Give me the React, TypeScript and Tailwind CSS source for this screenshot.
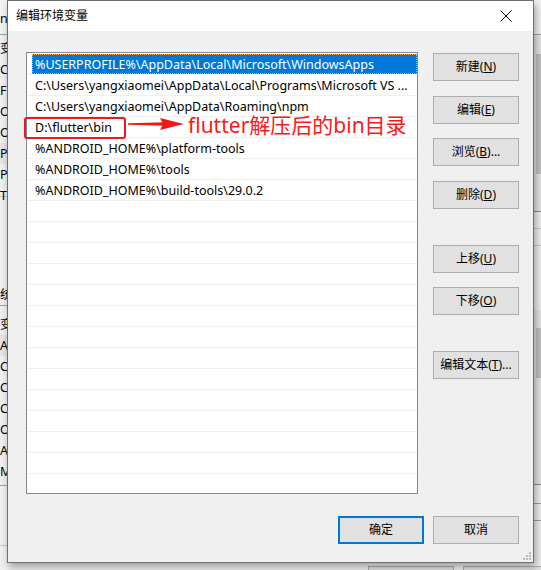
import React from "react";

const paths = [
  "%USERPROFILE%\\AppData\\Local\\Microsoft\\WindowsApps",
  "C:\\Users\\yangxiaomei\\AppData\\Local\\Programs\\Microsoft VS ...",
  "C:\\Users\\yangxiaomei\\AppData\\Roaming\\npm",
  "D:\\flutter\\bin",
  "%ANDROID_HOME%\\platform-tools",
  "%ANDROID_HOME%\\tools",
  "%ANDROID_HOME%\\build-tools\\29.0.2",
];

const bgRows = [
  { y: 8, t: "ng" },
  { y: 38, t: "变" },
  { y: 59, t: "Ch" },
  { y: 80, t: "FL" },
  { y: 101, t: "Or" },
  { y: 122, t: "Or" },
  { y: 143, t: "Pa", hl: true },
  { y: 164, t: "PU" },
  { y: 185, t: "TE" },
  { y: 284, t: "统" },
  { y: 314, t: "变" },
  { y: 335, t: "AN", hl: true },
  { y: 356, t: "Ch" },
  { y: 377, t: "CL" },
  { y: 398, t: "Co" },
  { y: 419, t: "Or" },
  { y: 440, t: "A" },
  { y: 461, t: "M" },
];

const font = { fontFamily: '"Noto Sans", "Noto Sans CJK SC", sans-serif' };

function Btn({ children, primary }: { children: React.ReactNode; primary?: boolean }) {
  return (
    <button
      className={`w-[86px] h-[28px] flex items-center justify-center text-[12px] text-black bg-[#e1e1e1] ${
        primary ? "border-2 border-[#0078d7]" : "border border-[#adadad]"
      }`}
    >
      {children}
    </button>
  );
}

export default function App() {
  return (
    <div className="relative w-[541px] h-[570px] overflow-hidden bg-[#f0f0f0]" style={font}>
      {/* window behind the dialog */}
      <div className="absolute inset-0">
        <div className="absolute left-0 top-0 w-full h-[35px] bg-[#f3f3f3] border-b border-[#a0a0a0]" />
        <div className="absolute left-0 top-[196px] w-[10px] h-[80px] bg-[#f0f0f0] border-t border-[#c8c8c8]" />
        <div className="absolute left-0 top-[305px] w-[10px] border-t border-[#a0a0a0]" />
        <div className="absolute left-0 top-[485px] w-[10px] border-t border-[#a0a0a0]" />
        <div className="absolute left-0 top-[545px] w-[10px] border-t border-[#c8c8c8]" />
        {bgRows.map((r) => (
          <div
            key={r.y + r.t}
            className={`absolute left-0 w-[10px] h-[21px] text-[12.5px] leading-[21px] text-black whitespace-nowrap ${
              r.hl ? "bg-[#e5e5e5]" : ""
            }`}
            style={{ top: r.y }}
          >
            {r.t}
          </div>
        ))}
        <div className="absolute right-0 top-[36px] w-[8px] h-[176px] bg-[#e6e6e6] border-b border-[#8a8a8a]">
          <div className="ml-[3px] mt-[18px] w-[5px] h-[120px] bg-[#c2c2c2]" />
        </div>
        <div className="absolute right-0 top-[228px] w-[8px] border-t border-[#c8c8c8]" />
        <div className="absolute right-0 top-[245px] w-[8px] border-t border-[#c8c8c8]" />
        <div className="absolute right-0 top-[310px] w-[8px] h-[175px] bg-[#e6e6e6] border-b border-[#8a8a8a]">
          <div className="ml-[3px] mt-[18px] w-[5px] h-[50px] bg-[#c2c2c2]" />
        </div>
        <div className="absolute right-0 top-[503px] w-[8px] border-t border-[#a0a0a0]" />
        <div className="absolute right-0 top-[520px] w-[8px] border-t border-[#a0a0a0]" />
        <div className="absolute left-[368px] top-[566px] w-[86px] h-[20px] border border-[#adadad] bg-[#e1e1e1]" />
        <div className="absolute left-[463px] top-[566px] w-[86px] h-[20px] border border-[#adadad] bg-[#e1e1e1]" />
      </div>

      {/* dialog */}
      <div className="relative ml-[7px] w-[527px] h-[563px] border border-[#707070] bg-[#f0f0f0] flex flex-col shadow-[2px_4px_8px_rgba(0,0,0,0.35)]">
        <div className="h-[30px] bg-white flex items-center justify-between pl-[8px] pr-[21px] shrink-0">
          <span className="text-[12px] text-black">编辑环境变量</span>
          <svg width="12" height="12" viewBox="0 0 12 12">
            <path d="M0.5 0.5 L11.5 11.5 M11.5 0.5 L0.5 11.5" stroke="#000" strokeWidth="1" />
          </svg>
        </div>

        <div className="flex-1 relative flex pl-[18px] pt-[21px]">
          <div className="w-[392px] h-[442px] border border-[#828790] bg-white overflow-hidden pt-[1px] pl-[1px]">
            {Array.from({ length: 21 }).map((_, i) => (
              <div key={i} className="h-[21px] border-b border-[#f0f0f0] flex">
                {i === 0 ? (
                  <div className="ml-[4px] flex-1 bg-[#0078d7] text-white text-[12.5px] leading-[19px] pl-[2px] border border-dotted border-[#f5a34a] whitespace-nowrap">
                    {paths[i]}
                  </div>
                ) : (
                  <div className="ml-[5px] pl-[2px] pt-[2px] text-[12.5px] leading-[18px] text-black whitespace-nowrap">
                    {paths[i] ?? ""}
                  </div>
                )}
              </div>
            ))}
          </div>

          <div className="ml-[15px] flex flex-col pt-[1px]">
            <Btn>
              新建(<u>N</u>)
            </Btn>
            <div className="mt-[15px]">
              <Btn>
                编辑(<u>E</u>)
              </Btn>
            </div>
            <div className="mt-[14px]">
              <Btn>
                浏览(<u>B</u>)...
              </Btn>
            </div>
            <div className="mt-[15px]">
              <Btn>
                删除(<u>D</u>)
              </Btn>
            </div>
            <div className="mt-[36px]">
              <Btn>
                上移(<u>U</u>)
              </Btn>
            </div>
            <div className="mt-[14px]">
              <Btn>
                下移(<u>O</u>)
              </Btn>
            </div>
            <div className="mt-[36px]">
              <Btn>
                编辑文本(<u>T</u>)...
              </Btn>
            </div>
          </div>

          <div className="absolute right-[14px] bottom-[18px] flex gap-[9px]">
            <Btn primary>确定</Btn>
            <Btn>取消</Btn>
          </div>

          {/* resize grip */}
          <div className="absolute right-[2px] bottom-[2px] grid grid-cols-3 gap-[1px]">
            {[0, 0, 1, 0, 1, 1, 1, 1, 1].map((v, i) => (
              <div key={i} className={`w-[2px] h-[2px] ${v ? "bg-[#bcbcbc]" : ""}`} />
            ))}
          </div>
        </div>
      </div>

      {/* red annotation */}
      <div className="absolute left-[24px] top-[117px] w-[102px] h-[22px] border-2 border-[#f01818] rounded-[3px]" />
      <svg className="absolute left-[127px] top-[115px]" width="60" height="18" viewBox="0 0 60 18">
        <path d="M1 8.2 L38 7.3 L38 10.7 L1 9.8 Z" fill="#f01818" />
        <path d="M33 3 L57 9 L33 15 L36 9 Z" fill="#f01818" />
      </svg>
      <div className="absolute left-[188px] top-[115px] text-[21px] leading-[20px] text-[#f81a1a] whitespace-nowrap">
        flutter解压后的bin目录
      </div>
    </div>
  );
}
